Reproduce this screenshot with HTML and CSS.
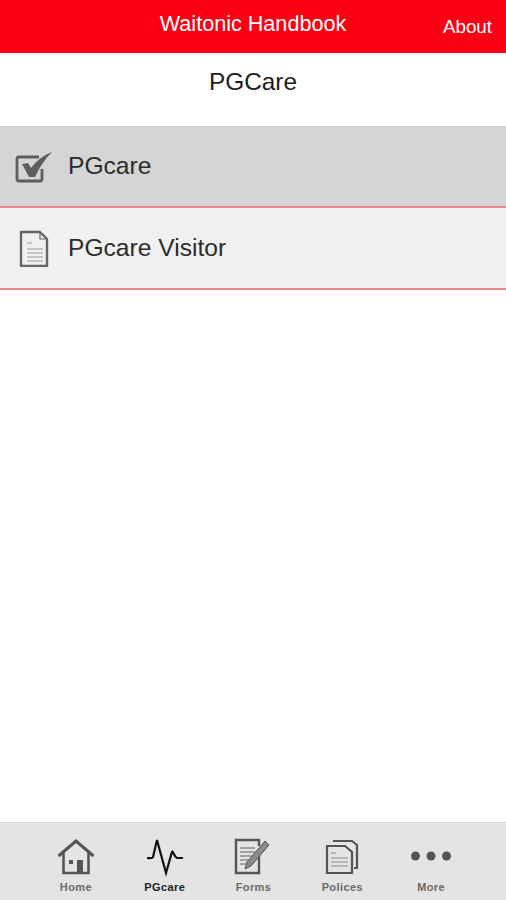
FILE: index.html
```html
<!DOCTYPE html>
<html lang="en">
<head>
    <meta charset="UTF-8">
    <meta name="viewport" content="width=device-width, initial-scale=1.0">
    <title>Waitonic Handbook</title>
    <link rel="stylesheet" href="styles.css">
</head>
<body>
    <header class="navbar">
        <span></span>
        <h1>Waitonic Handbook</h1>
        <a class="about" href="#">About</a>
    </header>

    <h2 class="page-title">PGCare</h2>

    <ul class="list">
        <li class="list-row active">
            <svg class="row-icon" viewBox="0 0 38 38" fill="none" stroke="#5e5e5e">
                <path d="M27 22v10a2 2 0 0 1-2 2H4a2 2 0 0 1-2-2V12a2 2 0 0 1 2-2h20" stroke-width="2.800"/>
                <path d="M7 17l6-1 3 5C21 14 29 8 37 5 30 12 24 21 20 30h-6z" fill="#5e5e5e" stroke="none"/>
            </svg>
            <span>PGcare</span>
        </li>
        <li class="list-row">
            <svg class="row-icon" viewBox="0 0 38 38" fill="none" stroke="#666">
                <path d="M6 3h19l7 7v27H6z" stroke-width="2.400" stroke-linejoin="round"/>
                <path d="M25 3v7h7" stroke-width="1.200"/>
                <path d="M12 14h5M12 20h16M12 24h16M12 28h16M12 32h16" stroke-width="1.200" stroke="#999"/>
            </svg>
            <span>PGcare Visitor</span>
        </li>
    </ul>

    <div class="spacer"></div>

    <nav class="tabbar">
        <a class="tab" href="#">
            <svg class="tab-icon" viewBox="0 0 38 36" fill="none" stroke="#555">
                <path d="M1.500 18L19 3l17.500 15" stroke-width="3"/>
                <path d="M6.500 14v21h25V14" stroke-width="2.600"/>
                <path d="M20 22h6v13h-6z" fill="#555" stroke="none"/>
                <path d="M12 22h4v4h-4z" fill="#555" stroke="none"/>
            </svg>
            <span>Home</span>
        </a>
        <a class="tab current" href="#">
            <svg class="tab-icon" viewBox="0 0 38 36" fill="none" stroke="#111">
                <path d="M1 20c3 0 5 1 6-1L11 2l9 33 6-21c1-2 2 5 5 6h6" stroke-width="2.200"/>
            </svg>
            <span>PGcare</span>
        </a>
        <a class="tab" href="#">
            <svg class="tab-icon" viewBox="0 0 38 36" fill="none" stroke="#555">
                <path d="M25 18v17H2V2h23v6" stroke-width="2.400"/>
                <path d="M6 10h15M6 14h15M6 18h12M6 22h9M6 26h7" stroke-width="1.300" stroke="#8a8a8a"/>
                <path d="M31 3l4 4-18 21-6 3 2-7z" fill="#8a8a8a" stroke="#555" stroke-width="1"/>
            </svg>
            <span>Forms</span>
        </a>
        <a class="tab" href="#">
            <svg class="tab-icon" viewBox="0 0 38 36" fill="none" stroke="#555">
                <path d="M10 3h19l5 4v23h-3" stroke-width="2.200"/>
                <path d="M4 8h18l7 6v21H4z" stroke-width="2.200" fill="#e4e4e4"/>
                <path d="M8 15h5M8 20h17M8 24h17M8 28h17" stroke-width="1.200" stroke="#8a8a8a"/>
            </svg>
            <span>Polices</span>
        </a>
        <a class="tab" href="#">
            <svg class="tab-icon" viewBox="0 0 38 36" fill="#555">
                <circle cx="3.500" cy="18" r="4.500"/>
                <circle cx="19" cy="18" r="4.500"/>
                <circle cx="34.500" cy="18" r="4.500"/>
            </svg>
            <span>More</span>
        </a>
    </nav>
</body>
</html>
```

FILE: styles.css
```css
html, body {
    height: 100%;
}
body {
    font-family: 'Liberation Sans', Arial, sans-serif;
    background-color: #fff;
    margin: 0;
    display: flex;
    flex-direction: column;
    color: #222;
}
.navbar {
    background-color: #fb0012;
    height: 53px;
    flex: none;
    display: grid;
    grid-template-columns: 1fr auto 1fr;
    color: #fff;
}
.navbar h1 {
    font-size: 21.6px;
    font-weight: normal;
    margin: 0;
    padding-top: 11px;
    line-height: 26px;
}
.about {
    justify-self: end;
    padding: 15px 14px 0 0;
    line-height: 24px;
    font-size: 18.8px;
    color: #fff;
    text-decoration: none;
}
.page-title {
    flex: none;
    height: 73px;
    margin: 0;
    box-sizing: border-box;
    padding-top: 14px;
    line-height: 29px;
    font-size: 24.4px;
    font-weight: normal;
    text-align: center;
    color: #1d1d1d;
}
.list {
    list-style: none;
    margin: 0;
    padding: 0;
    flex: none;
}
.list-row {
    height: 82px;
    box-sizing: border-box;
    border-bottom: 2px solid #e8898d;
    background-color: #f0f0f0;
    display: flex;
    align-items: center;
    font-size: 24.6px;
    color: #2b2b2b;
}
.list-row.active {
    background-color: #d5d5d5;
}
.row-icon {
    width: 38px;
    height: 38px;
    margin: 0 15px;
    flex: none;
}
.spacer {
    flex: 1;
}
.tabbar {
    flex: none;
    height: 77px;
    border-top: 1px solid #d6d6d6;
    background-color: #e4e4e4;
    padding: 0 30.5px 0 31.5px;
    display: grid;
    grid-template-columns: repeat(5, 1fr);
}
.tab {
    display: flex;
    flex-direction: column;
    align-items: center;
    padding-top: 15px;
    font-size: 11px;
    font-weight: bold;
    letter-spacing: 0.4px;
    line-height: 14px;
    color: #6a6a6a;
    text-decoration: none;
}
.tab.current {
    color: #222;
}
.tab-icon {
    width: 38px;
    height: 36px;
    margin-bottom: 6px;
    overflow: visible;
}
```
